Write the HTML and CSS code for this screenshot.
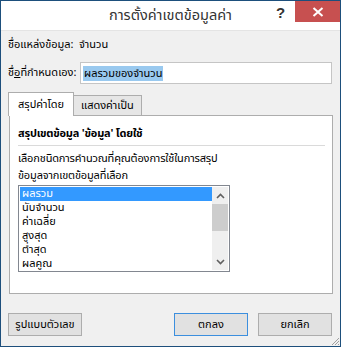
FILE: index.html
```html
<!DOCTYPE html>
<html lang="th">
<head>
<meta charset="utf-8">
<link rel="stylesheet" href="styles.css">
</head>
<body>
<div class="dialog">
  <div class="titlebar">
    <div class="title">การตั้งค่าเขตข้อมูลค่า</div>
    <div class="help">?</div>
    <div class="close">
      <svg width="12" height="10" viewBox="0 0 12 10"><path d="M1.5 1 L10.5 9 M10.5 1 L1.5 9" stroke="#fff" stroke-width="2"/></svg>
    </div>
  </div>
  <div class="body">
    <div class="row src">
      <span class="lbl">ชื่อแหล่งข้อมูล:</span>
      <span class="val">จำนวน</span>
    </div>
    <div class="row custom">
      <span class="lbl2">ชื่<u>อ</u>ที่กำหนดเอง:</span>
      <div class="input"><span class="sel">ผลรวมของจำนวน</span></div>
    </div>
    <div class="tabs">
      <div class="tab active">สรุปค่าโดย</div>
      <div class="tab">แสดงค่าเป็น</div>
    </div>
    <div class="panel">
      <div class="heading">สรุปเขตข้อม<u>ู</u>ล 'ข้อมูล' โดยใช้</div>
      <div class="sep"></div>
      <div class="desc">เลือกชนิดการคำนวณที่คุณต้องการใช้ในการสรุป</div>
      <div class="desc">ข้อมูลจากเขตข้อมูลที่เลือก</div>
      <div class="list">
        <div class="items">
          <div class="item selected">ผลรวม</div>
          <div class="item">นับจำนวน</div>
          <div class="item">ค่าเฉลี่ย</div>
          <div class="item">สูงสุด</div>
          <div class="item">ต่ำสุด</div>
          <div class="item">ผลคูณ</div>
        </div>
        <div class="scroll">
          <div class="arrow up"><svg width="9" height="6" viewBox="0 0 9 6"><path d="M1 5 L4.5 1.5 L8 5" fill="none" stroke="#606060" stroke-width="1.6"/></svg></div>
          <div class="thumb"></div>
          <div class="track"></div>
          <div class="arrow down"><svg width="9" height="6" viewBox="0 0 9 6"><path d="M1 1 L4.5 4.5 L8 1" fill="none" stroke="#606060" stroke-width="1.6"/></svg></div>
        </div>
      </div>
    </div>
    <div class="buttons">
      <div class="btn"><u>รู</u>ปแบบตัวเลข</div>
      <div class="spacer"></div>
      <div class="btn default">ตกลง</div>
      <div class="btn">ยกเลิก</div>
    </div>
  </div>
  <svg class="grip" width="10" height="10" viewBox="0 0 10 10"><path d="M9 2 L2 9 M9 5 L5 9 M9 8 L8 9" stroke="#a0a0a0" stroke-width="1"/></svg>
</div>
</body>
</html>
```
FILE: styles.css
```css
* { box-sizing: border-box; }
html, body { margin: 0; padding: 0; }
body {
  font-family: "Noto Sans Thai", "Noto Sans", Tahoma, sans-serif;
  font-size: 11px;
  color: #000;
  background: #fff;
  white-space: nowrap;
}
.dialog {
  position: relative;
  width: 341px;
  height: 347px;
  border: 1px solid #1d4f7c;
  background: #f0f0f0;
  display: flex;
  flex-direction: column;
}
.titlebar {
  position: relative;
  height: 30px;
  background: #fff;
  display: flex;
  align-items: center;
  justify-content: center;
  border-bottom: 1px solid #e4e4e4;
}
.title {
  font-size: 14.5px;
  line-height: 20px;
  color: #333;
  margin-top: 1px;
}
.help {
  position: absolute;
  left: 275px;
  top: 3px;
  font-family: "Liberation Sans", sans-serif;
  font-weight: bold;
  font-size: 15px;
  line-height: 18px;
  color: #333;
}
.close {
  position: absolute;
  right: 0;
  top: 0;
  width: 45px;
  height: 21px;
  background: #c75050;
  display: flex;
  align-items: center;
  justify-content: center;
}
.body {
  flex: 1;
  padding: 0 8px 0 7px;
  display: flex;
  flex-direction: column;
}
.row { display: flex; align-items: center; line-height: 16px; }
.src { height: 26px; margin-top: 1px; }
.lbl { width: 71px; }
.custom { height: 30px; }
.lbl2 { width: 72px; }
.input {
  flex: 1;
  height: 22px;
  border: 1px solid #c5c5c5;
  background: #fff;
  display: flex;
  align-items: center;
  padding-left: 2px;
}
.sel {
  background: #99c9ef;
  padding: 0 1px;
  line-height: 15px;
}
.tabs {
  display: flex;
  align-items: flex-end;
  margin-top: 3px;
  height: 24px;
}
.tab {
  height: 20px;
  padding: 0 7px;
  border: 1px solid #adadad;
  border-bottom: none;
  background: #e6e6e6;
  display: flex;
  align-items: center;
  margin-left: -1px;
  line-height: 16px;
}
.tab.active {
  height: 24px;
  margin-left: 0;
  background: #fff;
  padding: 0 9px;
  position: relative;
  z-index: 1;
  margin-bottom: -1px;
  width: 66px;
}
.panel {
  height: 179px;
  border: 1px solid #adadad;
  background: #fff;
  padding: 9px 7px 0 8px;
  margin-left: 1px;
  width: 324px;
}
.heading {
  font-weight: bold;
  height: 18px;
  line-height: 18px;
  letter-spacing: -0.2px;
}
.sep {
  border-top: 1px solid #dadada;
  margin-top: 2px;
  margin-bottom: 4px;
}
.desc {
  height: 17px;
  line-height: 17px;
  letter-spacing: -0.15px;
}
.list {
  margin-top: 1px;
  width: 212px;
  height: 87px;
  border: 1px solid #828790;
  display: flex;
  padding: 1px;
}
.items { flex: 1; overflow: hidden; }
.item {
  height: 14px;
  line-height: 14px;
  padding-left: 2px;
}
.item.selected { background: #3399ff; color: #fff; }
.scroll {
  width: 16px;
  background: #efefef;
  display: flex;
  flex-direction: column;
}
.arrow {
  height: 17px;
  display: flex;
  align-items: center;
  justify-content: center;
}
.thumb {
  height: 27px;
  background: #cdcdcd;
}
.track { flex: 1; }
.buttons {
  display: flex;
  margin-top: 19px;
  gap: 10px;
}
.spacer { flex: 1; }
.btn {
  width: 74px;
  height: 23px;
  border: 1px solid #adadad;
  background: #e1e1e1;
  display: flex;
  align-items: center;
  justify-content: center;
  line-height: 16px;
}
.btn.default { border-color: #3c8fde; }
.grip {
  position: absolute;
  right: 0;
  bottom: 0;
}
u { text-decoration: underline; }
```
